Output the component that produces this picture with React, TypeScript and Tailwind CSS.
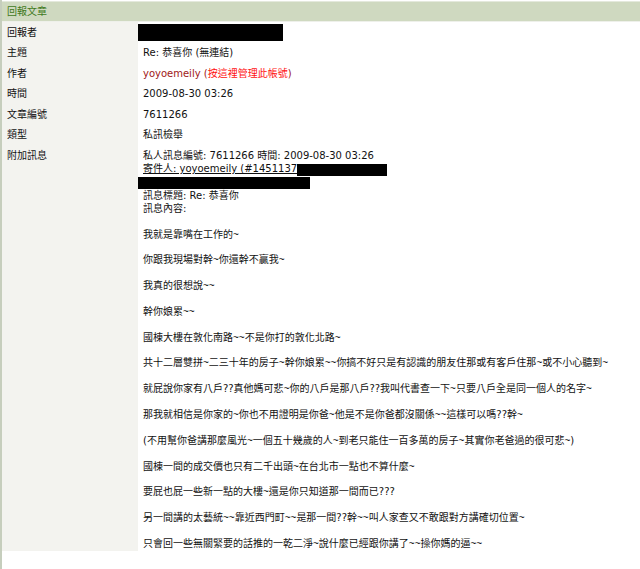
const font = { fontFamily: '"DejaVu Sans", "Noto Sans CJK TC", sans-serif' };

const rows: { label: string; value: React.ReactNode }[] = [
  { label: "回報者", value: <div className="-ml-[5px] mt-[1px] h-[17px] w-[145px] bg-black" /> },
  { label: "主題", value: <span>Re: 恭喜你 (無連結)</span> },
  {
    label: "作者",
    value: (
      <span className="text-[#a01818]">
        yoyoemeily (<span className="text-[#ff1010]">按這裡管理此帳號</span>)
      </span>
    ),
  },
  { label: "時間", value: <span>2009-08-30 03:26</span> },
  { label: "文章編號", value: <span>7611266</span> },
  { label: "類型", value: <span>私訊檢舉</span> },
];

const messages = [
  "我就是靠嘴在工作的~",
  "你跟我現場對幹~你還幹不贏我~",
  "我真的很想說~~",
  "幹你娘累~~",
  "國棟大樓在敦化南路~~不是你打的敦化北路~",
  "共十二層雙拼~二三十年的房子~幹你娘累~~你搞不好只是有認識的朋友住那或有客戶住那~或不小心聽到~",
  "就屁說你家有八戶??真他媽可悲~你的八戶是那八戶??我叫代書查一下~只要八戶全是同一個人的名字~",
  "那我就相信是你家的~你也不用證明是你爸~他是不是你爸都沒關係~~這樣可以嗎??幹~",
  "(不用幫你爸講那麼風光~一個五十幾歲的人~到老只能住一百多萬的房子~其實你老爸過的很可悲~)",
  "國棟一間的成交價也只有二千出頭~在台北市一點也不算什麼~",
  "要屁也屁一些新一點的大樓~還是你只知道那一間而已???",
  "另一間講的太藝統~~靠近西門町~~是那一間??幹~~叫人家查又不敢跟對方講確切位置~",
  "只會回一些無關緊要的話推的一乾二淨~說什麼已經跟你講了~~操你媽的逼~~",
];

// DejaVu's tilde is too wide, so tildes get a narrower face
function Tilded({ text }: { text: string }) {
  const parts = text.split(/(~+)/);
  return (
    <>
      {parts.map((p, i) =>
        p.startsWith("~") ? (
          <span key={i} className="font-['Liberation_Sans']">
            {p}
          </span>
        ) : (
          <span key={i}>{p}</span>
        ),
      )}
    </>
  );
}

export default function App() {
  return (
    <div className="min-h-[569px] w-[640px] bg-white text-[10px] text-[#111]" style={font}>
      <div className="flex min-h-[569px] flex-col border-l-2 border-[#c6cebd]">
        <div className="mt-[1px] flex h-[20px] items-center border-t border-[#e4e9dc] bg-[#cfd9c0] pl-[5px] text-[#3f7a22]">
          回報文章
        </div>
        <div className="grid flex-1 grid-cols-[136px_1fr] content-start border-t border-[#eef0ea]">
          {rows.map((r) => (
            <div key={r.label} className="contents">
              <div className="flex h-[20.5px] items-center bg-[#f3f3ef] pl-[5px]">{r.label}</div>
              <div className="flex h-[20.5px] items-center pl-[5px]">{r.value}</div>
            </div>
          ))}
          <div className="bg-[#f3f3ef] pl-[5px] pt-[4px] leading-[13px]">附加訊息</div>
          <div className="pl-[5px] pt-[5px] leading-[12.9px]">
            <div>私人訊息編號: 7611266 時間: 2009-08-30 03:26</div>
            <div className="flex items-start">
              <span className="underline">寄件人: yoyoemeily (#1451137</span>
              <span className="mt-[1px] h-[12px] w-[90px] bg-black" />
            </div>
            <div className="-ml-[5px] h-[12.9px]">
              <div className="mt-[1px] h-[12px] w-[172px] bg-black" />
            </div>
            <div>訊息標題: Re: 恭喜你</div>
            <div>訊息內容:</div>
            <div className="mt-[12.9px] flex flex-col gap-[12.9px]">
              {messages.map((m, i) => (
                <div key={i}>
                  <Tilded text={m} />
                </div>
              ))}
            </div>
          </div>
          <div className="bg-[#f3f3ef]" />
          <div />
        </div>
      </div>
    </div>
  );
}
